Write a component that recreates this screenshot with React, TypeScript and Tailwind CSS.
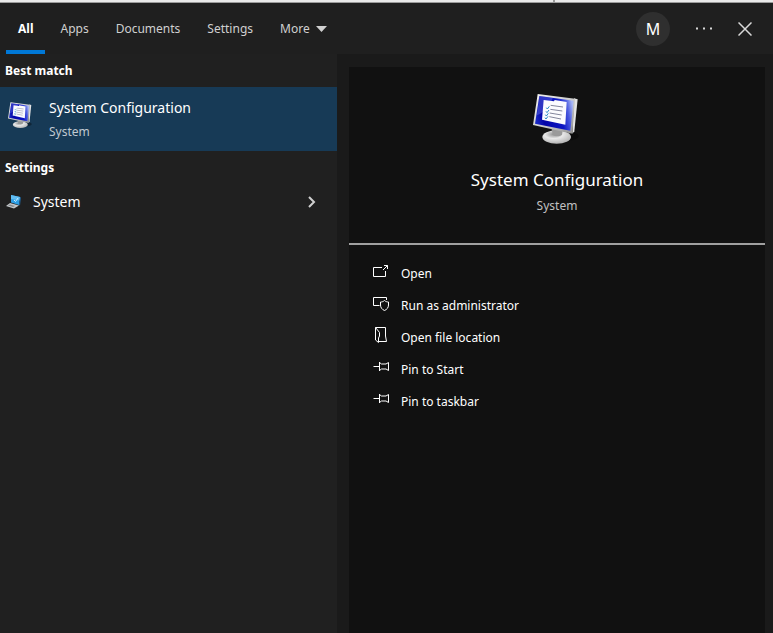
import { useState } from "react";

const tabs = ["All", "Apps", "Documents", "Settings"];

const pinPath = "M.5 7.5h6M6.5 3v9M6.5 3.5l2 1.5H13l2.5-1.5v8L13 10H8.5l-2 1.5";

const actions = [
  { label: "Open", path: "M9 4.5H.5v9h12V8M10 7l4.5-4.5M11 2.5h3.5V6" },
  {
    label: "Run as administrator",
    path: "M6.5 10.5H.5v-8h13V5M11.5 5.5c1 1 2.5 1.5 4 1.5v3c0 2.5-1.5 4.500-4 5.5-2.5-1-4-3-4-5.5V7c1.5 0 3-.5 4-1.5z",
  },
  {
    label: "Open file location",
    path: "M2.5.5h10V9l1 5.5H6M2.5.5V13l3 2.5V11l1-2V5.500z",
  },
  { label: "Pin to Start", path: pinPath },
  { label: "Pin to taskbar", path: pinPath },
];

const MonitorIcon = ({ id, className }: { id: string; className: string }) => (
  <svg viewBox="67 36 144 159" className={className} aria-hidden="true">
    <defs>
      <linearGradient id={`${id}-screen`} x1="0" y1="0.6" x2="1" y2="0.4">
        <stop offset="0" stopColor="#1a2ac4" />
        <stop offset="0.2" stopColor="#0404a8" />
        <stop offset="0.65" stopColor="#0c16c4" />
        <stop offset="0.85" stopColor="#4c5ce0" />
        <stop offset="1" stopColor="#a9b8f4" />
      </linearGradient>
      <linearGradient id={`${id}-frame`} x1="0" y1="0" x2="1" y2="1">
        <stop offset="0" stopColor="#f4f4f4" />
        <stop offset="0.6" stopColor="#c6c6c6" />
        <stop offset="1" stopColor="#8d8d8d" />
      </linearGradient>
      <radialGradient id={`${id}-foot`} cx="0.4" cy="0.3" r="0.7">
        <stop offset="0" stopColor="#909090" />
        <stop offset="0.45" stopColor="#e8e8e8" />
        <stop offset="1" stopColor="#b4b4b4" />
      </radialGradient>
    </defs>
    <ellipse cx="168" cy="168" rx="36" ry="14" fill="#000" opacity="0.35" />
    <ellipse cx="138" cy="171" rx="43" ry="20" fill={`url(#${id}-foot)`} />
    <path d="M122 140h36l-4 24c-8 6-20 6-28 0z" fill="#9a9a9a" />
    <path d="M190 55l11 3-10 96-6 7z" fill="#e4e4e4" />
    <path d="M81 42l112 14-8 105L67 135z" fill={`url(#${id}-frame)`} />
    <path d="M86 48l103 14-10 90L73 131z" fill={`url(#${id}-screen)`} />
    <path d="M86 48l40 6c-6 22-24 42-47 52z" fill="#8ea2ff" opacity="0.3" />
    <path d="M99 60l31 4 2-4 36 6-4 68-70-15z" fill="#fbfbff" />
    <path d="M120 76l37 5M119 88l36 5M117 99l36 6M116 110l35 7" stroke="#6a6d88" strokeWidth="2.5" />
    <path
      d="M107 83l3 4 6-8M106 94l3 4 6-8M104 104l3 4 6-8M103 113l3 4 6-8"
      fill="none"
      stroke="#2789c4"
      strokeWidth="3"
    />
  </svg>
);

const LaptopIcon = () => (
  <svg viewBox="0 0 16 16" className="size-4" aria-hidden="true">
    <path d="M5 1l9 2-1 8-8-2.5z" fill="#2d9fe5" />
    <path d="M5 1l9 2-.5 3.5L5 5z" fill="#61bdf3" />
    <path d="M8 6l1.5 1.5L12 4" fill="none" stroke="#c7ecff" />
    <path d="M4 9l9 2.5-5 3L0 12z" fill="#c4c8cb" />
    <path d="M4 10.5l5 1.5-2 1-5-1.5z" fill="#85898d" />
    <path d="M14 3l1 .5-1 8-1-.5z" fill="#205f91" />
  </svg>
);

const App = () => {
  const [active, setActive] = useState("All");

  return (
    <div className="flex min-h-screen flex-col bg-[#1a1a1a] font-['Segoe_UI','Noto_Sans',sans-serif] text-white">
      {/* EDGE OF THE WINDOW BEHIND */}
      <div className="flex h-[3px] border-b border-[#9b9b9b] bg-[#e9e9e9]">
        <div className="w-[555px] border-r-2 border-[#999]" />
      </div>

      {/* TABS */}
      <header className="flex h-[51px] items-stretch justify-between bg-[#1f1f1f] pr-[21px] pl-1.5">
        <nav className="flex gap-[3px] text-xs text-[#d0d0d0]">
          {tabs.map((tab) => (
            <button
              key={tab}
              onClick={() => setActive(tab)}
              className={
                active === tab
                  ? "border-b-4 border-[#0078d7] px-3 pt-1 font-bold text-white"
                  : "border-b-4 border-transparent px-3 pt-1"
              }
            >
              {tab}
            </button>
          ))}
          <button className="flex items-center gap-1.5 border-b-4 border-transparent px-3 pt-1">
            More
            <svg viewBox="0 0 11 6" className="h-1.5 w-[11px]" aria-hidden="true">
              <path d="M0 0h11L5.5 6z" fill="currentColor" />
            </svg>
          </button>
        </nav>

        <div className="flex items-center gap-[26px] text-[#d8d8d8]">
          <button className="size-[34px] rounded-full bg-[#2f2f2f] text-base text-white">M</button>
          <button aria-label="Options">
            <svg viewBox="0 0 16 16" className="size-4" aria-hidden="true">
              <path d="M0 6.5h2v2H0zM7 6.5h2v2H7zM14 6.5h2v2h-2z" fill="currentColor" />
            </svg>
          </button>
          <button aria-label="Close">
            <svg viewBox="0 0 14 14" className="size-3.5" aria-hidden="true">
              <path d="M.5.5l13 13M13.5.5l-13 13" stroke="currentColor" strokeWidth="1.5" />
            </svg>
          </button>
        </div>
      </header>

      <main className="flex flex-1">
        {/* RESULTS */}
        <section className="w-[337px] shrink-0 bg-[#202020]">
          <h2 className="px-[5px] text-xs leading-[33px] font-bold">Best match</h2>
          <button className="flex h-16 w-full items-start gap-4 bg-[#173a56] px-2 pt-2.5 text-left">
            <MonitorIcon id="small" className="mt-1 h-7 w-[25px]" />
            <span className="flex flex-col">
              <span className="text-sm leading-[22px]">System Configuration</span>
              <span className="text-xs leading-[26px] text-[#c0c9d1]">System</span>
            </span>
          </button>
          <h2 className="px-[5px] text-xs leading-[33px] font-bold">Settings</h2>
          <button className="flex h-[35px] w-full items-center px-1.5 text-left">
            <LaptopIcon />
            <span className="ml-[11px] flex-1 text-sm">System</span>
            <svg viewBox="0 0 8 12" className="mr-[15px] h-3 w-2" aria-hidden="true">
              <path d="M1 1l5 5-5 5" fill="none" stroke="#d0d0d0" strokeWidth="2" />
            </svg>
          </button>
        </section>

        {/* DETAILS */}
        <section className="mt-[13px] mr-2 ml-3 flex-1 bg-[#111111]">
          <div className="flex h-[178px] flex-col items-center border-b-2 border-[#a0a0a0] pt-[25px]">
            <MonitorIcon id="large" className="h-[53px] w-12" />
            <h1 className="mt-[22px] text-[17px] leading-[26px]">System Configuration</h1>
            <p className="text-xs leading-[26px] text-[#c0c0c0]">System</p>
          </div>
          <ul className="px-6 pt-3">
            {actions.map((action) => (
              <li key={action.label}>
                <button className="flex h-8 w-full items-center gap-3 text-left text-xs">
                  <svg viewBox="0 0 16 16" className="mb-1 size-4" aria-hidden="true">
                    <path d={action.path} fill="none" stroke="currentColor" />
                  </svg>
                  <span className="pt-0.5">{action.label}</span>
                </button>
              </li>
            ))}
          </ul>
        </section>
      </main>
    </div>
  );
};

export default App;
